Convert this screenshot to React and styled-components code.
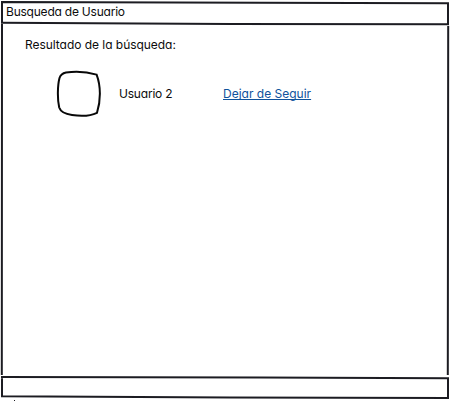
import React from "react";
import styled, { createGlobalStyle } from "styled-components";

const GlobalStyle = createGlobalStyle`
  * { box-sizing: border-box; }
  body { margin: 0; background: #fff; }
`;

const Window = styled.main`
  position: relative;
  width: 459px;
  height: 404px;
  display: flex;
  flex-direction: column;
  overflow: hidden;
  background: #fff;
  color: #0c0c0c;
  font-family: Inter, "Open Sans", sans-serif;
  font-feature-settings: "cv11" 1;
  font-size: 12px;
  line-height: 16px;
`;

const Outline = styled.svg`
  position: absolute;
  inset: 0;
  pointer-events: none;
  fill: none;
  stroke: #1c1c22;
  stroke-width: 2;
`;

const Speck = styled.path`
  stroke-width: 1;
`;

const TitleBar = styled.header`
  height: 24px;
  padding: 4px 0 0 6px;
`;

const Content = styled.section`
  flex: 1;
  padding: 13px 0 0 25px;
`;

const Label = styled.span`
  display: block;
  white-space: nowrap;
  letter-spacing: ${({ $tracking = 0 }) => $tracking}px;
`;

const ResultRow = styled.div`
  display: grid;
  grid-template-columns: 94px 104px auto;
  align-items: center;
  height: 48px;
  margin-top: 17px;
`;

const Avatar = styled.svg`
  display: block;
  width: 46px;
  height: 48px;
  margin-left: 31px;
  fill: #fff;
  stroke: #080808;
  stroke-width: 2;
`;

const FollowLink = styled.a`
  justify-self: start;
  color: #0f529c;
  white-space: nowrap;
  text-decoration: underline;
  text-decoration-thickness: 1px;
  text-underline-offset: 1px;
  text-decoration-skip-ink: none;
`;

const StatusBar = styled.footer`
  height: 27px;
`;

export default function App() {
  return (
    <>
      <GlobalStyle />
      <Window>
        <TitleBar>
          <Label $tracking={-0.22}>Busqueda de Usuario</Label>
        </TitleBar>
        <Content>
          <Label $tracking={-0.04}>Resultado de la búsqueda:</Label>
          <ResultRow>
            <Avatar viewBox="0 0 46 48" aria-hidden="true">
              <path d="M3.5 8C4.5 4.5 6 3.2 10 2.4Q26 0.2 40.6 4.6C45 16 44.8 31 41 42.8C34 46.2 24 46.2 16 45C9 44 4.5 41.5 3.2 37.5C1.2 29 1.6 15 3.5 8Z" />
            </Avatar>
            <Label $tracking={-0.2}>Usuario 2</Label>
            <FollowLink href="#">Dejar de Seguir</FollowLink>
          </ResultRow>
        </Content>
        <StatusBar />
        <Outline width="459" height="404" aria-hidden="true">
          <path d="M2 22V2L260 2.7L448 3.3V24" />
          <path d="M1 22.8L230 24L449 24.3" />
          <path d="M2 24L1.8 375M448.2 26L447.8 375" />
          <path d="M1 377L260 377.4L448 378.2V398L230 397.5L2 396.3V377" />
          <Speck d="M14 400.5h1" />
        </Outline>
      </Window>
    </>
  );
}
